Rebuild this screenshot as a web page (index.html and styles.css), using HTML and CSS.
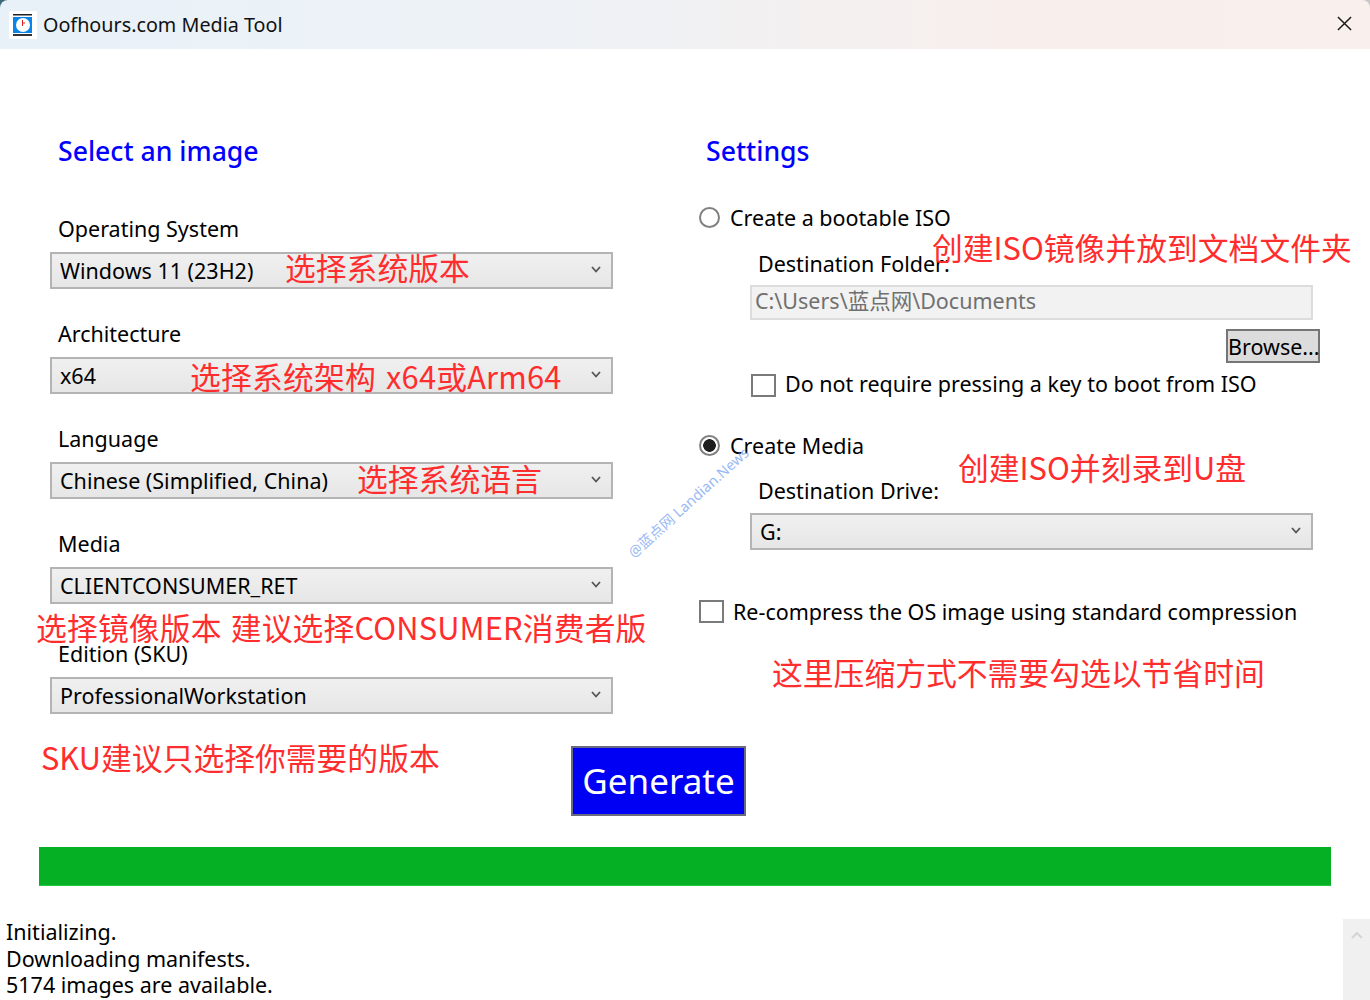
FILE: index.html
```html
<!DOCTYPE html>
<html lang="zh-CN">
<head>
<meta charset="utf-8">
<title>Oofhours.com Media Tool</title>
<link rel="stylesheet" href="styles.css">
</head>
<body>
<div class="window">
  <header class="titlebar">
    <svg class="app-icon" viewBox="0 0 28 28" aria-hidden="true">
      <rect width="28" height="28" fill="#fff"/>
      <rect x="4" y="3" width="19" height="1.5" fill="#222"/>
      <rect x="4" y="23" width="19" height="2" fill="#333"/>
      <rect x="4" y="6" width="19" height="16" fill="#0a84e8"/>
      <circle cx="14" cy="14" r="7" fill="#fff"/>
      <path d="M13.5 9v6M13.5 12h2.5" stroke="#e02020" stroke-width="1" fill="none"/>
    </svg>
    <span class="title">Oofhours.com Media Tool</span>
    <svg class="close" viewBox="0 0 16 16" aria-hidden="true"><path d="M1 1l14 14M15 1L1 15" stroke="#1a1a1a" stroke-width="1.6" fill="none"/></svg>
  </header>

  <main class="content">
    <section class="left">
      <h2 class="heading">Select an image</h2>
      <div class="field"><label class="label">Operating System</label>
        <div class="select"><span>Windows 11 (23H2)</span><svg class="chev" viewBox="0 0 10 7"><path d="M1 1l4 4.5 4-4.5" stroke="#555" stroke-width="1.8" fill="none"/></svg></div></div>
      <div class="field"><label class="label">Architecture</label>
        <div class="select"><span>x64</span><svg class="chev" viewBox="0 0 10 7"><path d="M1 1l4 4.5 4-4.5" stroke="#555" stroke-width="1.8" fill="none"/></svg></div></div>
      <div class="field"><label class="label">Language</label>
        <div class="select"><span>Chinese (Simplified, China)</span><svg class="chev" viewBox="0 0 10 7"><path d="M1 1l4 4.5 4-4.5" stroke="#555" stroke-width="1.8" fill="none"/></svg></div></div>
      <div class="field"><label class="label">Media</label>
        <div class="select"><span>CLIENTCONSUMER_RET</span><svg class="chev" viewBox="0 0 10 7"><path d="M1 1l4 4.5 4-4.5" stroke="#555" stroke-width="1.8" fill="none"/></svg></div></div>
      <div class="field field-sku"><label class="label">Edition (SKU)</label>
        <div class="select"><span>ProfessionalWorkstation</span><svg class="chev" viewBox="0 0 10 7"><path d="M1 1l4 4.5 4-4.5" stroke="#555" stroke-width="1.8" fill="none"/></svg></div></div>
    </section>

    <section class="right">
      <h2 class="heading heading-right">Settings</h2>
      <div class="option opt-iso"><span class="radio"></span><span>Create a bootable ISO</span></div>
      <div class="sub-label sub-folder">Destination Folder:</div>
      <div class="pathbox">C:\Users\蓝点网\Documents</div>
      <div class="browse-row"><button class="browse">Browse...</button></div>
      <div class="option opt-key"><span class="check check-low"></span><span>Do not require pressing a key to boot from ISO</span></div>
      <div class="option opt-media"><span class="radio radio-on"></span><span>Create Media</span></div>
      <div class="sub-label sub-drive">Destination Drive:</div>
      <div class="select select-drive"><span>G:</span><svg class="chev" viewBox="0 0 10 7"><path d="M1 1l4 4.5 4-4.5" stroke="#555" stroke-width="1.8" fill="none"/></svg></div>
      <div class="option opt-comp"><span class="check"></span><span>Re-compress the OS image using standard compression</span></div>
    </section>
  </main>

  <div class="generate-row"><button class="generate">Generate</button></div>
  <div class="progress"></div>

  <footer class="log">
    <div class="log-text">Initializing.<br>Downloading manifests.<br>5174 images are available.</div>
    <div class="scrollbar"><svg class="scroll-up" viewBox="0 0 12 7"><path d="M1 6l5-5 5 5" stroke="#d4d4d4" stroke-width="2" fill="none"/></svg></div>
  </footer>

  <span class="note n1">选择系统版本</span>
  <span class="note n2">选择系统架构 x64或Arm64</span>
  <span class="note n3">选择系统语言</span>
  <span class="note n4">选择镜像版本 建议选择CONSUMER消费者版</span>
  <span class="note n5">SKU建议只选择你需要的版本</span>
  <span class="note n6">创建ISO镜像并放到文档文件夹</span>
  <span class="note n7">创建ISO并刻录到U盘</span>
  <span class="note n8">这里压缩方式不需要勾选以节省时间</span>
  <span class="watermark">@蓝点网 Landian.News</span>
</div>
</body>
</html>
```

FILE: styles.css
```css
* { box-sizing: border-box; }
html, body { margin: 0; padding: 0; background: #fff; }
body { font-family: "Noto Sans", "Noto Sans CJK SC", sans-serif; color: #000; }
.window { position: relative; width: 1370px; height: 1000px; overflow: hidden; font-size: 21.5px; background: #fff linear-gradient(90deg, #3a6a78 50%, #c8c8c8 50%) no-repeat 0 0 / 100% 10px; }

.titlebar { height: 49px; display: flex; align-items: center; padding: 0 18px 0 9px; border-radius: 8px 8px 0 0; background: linear-gradient(90deg, #e8f1f8 0%, #eef2f6 40%, #f8efec 75%, #f9f0ed 100%); }
.app-icon { width: 28px; height: 28px; flex: none; }
.title { margin-left: 6px; font-size: 19.75px; color: #111; }
.close { width: 15px; height: 15px; margin: 0 0 2px auto; }

.content { display: flex; height: 697px; }
.left { width: 563px; margin-left: 50px; flex: none; }
.right { width: 621px; margin-left: 86px; flex: none; }

.heading { margin: 0; height: 30px; line-height: 30px; font-size: 26.6px; font-weight: 500; color: #0000ff; white-space: nowrap; }
.left .heading { margin: 87px 0 50px 8px; }
.heading-right { margin: 87px 0 0 7px; }

.field { height: 105px; }
.field-sku { margin-top: 5px; }
.label { display: block; height: 26px; line-height: 26px; margin: 0 0 10px 8px; }

.select { height: 37px; display: flex; align-items: center; justify-content: space-between; padding: 0 10px 0 8px; border: 2px solid #b4b4b4; background: linear-gradient(#f0f0f0, #e6e6e6); white-space: nowrap; }
.select span { line-height: 30px; }
.chev { width: 10px; height: 7px; margin-bottom: 2px; }

.option { display: flex; align-items: center; white-space: nowrap; }
.radio { width: 21px; height: 21px; flex: none; border: 2px solid #808080; border-radius: 50%; margin-right: 10px; background: #fff; }
.radio-on { background: radial-gradient(circle, #1e1e1e 0 6px, #fff 6.6px); }
.check { width: 25px; height: 23px; flex: none; border: 2px solid #7a7a7a; background: #fff; margin-right: 9px; }
.check-low { margin-top: 4px; }

.opt-iso { height: 26px; margin-top: 38px; }
.sub-label { height: 26px; line-height: 26px; margin-left: 59px; }
.sub-folder { margin-top: 21px; }
.pathbox { width: 563px; height: 35px; margin: 8px 0 0 51px; padding-left: 3px; line-height: 28px; border: 2px solid #dcdcdc; background: #f2f2f2; color: #707070; }
.browse-row { display: flex; justify-content: flex-end; margin-top: 9px; }
.browse { width: 94px; height: 34px; padding: 0; font: inherit; color: #000; border: 2px solid #757575; background: #dcdcdc; }
.opt-key { height: 26px; margin: 7px 0 0 52px; }
.opt-media { height: 26px; margin-top: 36px; }
.sub-drive { margin-top: 20px; }
.select-drive { width: 563px; margin: 9px 0 0 51px; }
.opt-comp { height: 26px; margin: 48px 0 0 0; }

.generate-row { padding-left: 571px; }
.generate { width: 175px; height: 70px; padding: 0 0 2px; font: inherit; font-size: 35px; color: #fff; border: 2px solid #6b6b80; background: #0000f5; }
.progress { height: 39px; margin: 31px 39px 0; background: #06b025; border-bottom: 1px solid #22c840; }

.log { display: flex; justify-content: space-between; height: 81px; margin-top: 33px; }
.log-text { padding-left: 6px; line-height: 26.5px; }
.scrollbar { width: 27px; background: #f0f0f0; flex: none; padding-top: 13px; display: flex; justify-content: center; align-items: flex-start; }
.scroll-up { width: 12px; height: 7px; }

.note { position: absolute; font-family: "Noto Sans CJK SC", sans-serif; font-size: 30.8px; line-height: 40px; color: #ff2d2d; white-space: nowrap; }
.n1 { left: 285px; top: 247px; }
.n2 { left: 190px; top: 356px; word-spacing: 3px; letter-spacing: 0.2px; }
.n3 { left: 357px; top: 458px; }
.n4 { left: 36px; top: 607px; word-spacing: 2px; letter-spacing: 0.15px; }
.n5 { left: 41px; top: 737px; }
.n6 { left: 932px; top: 227px; }
.n7 { left: 958px; top: 447px; }
.n8 { left: 772px; top: 652px; }

.watermark { position: absolute; left: 610px; top: 492px; font-size: 14.5px; line-height: 20px; color: #9bb9f5; white-space: nowrap; transform: rotate(-42deg); }
```
